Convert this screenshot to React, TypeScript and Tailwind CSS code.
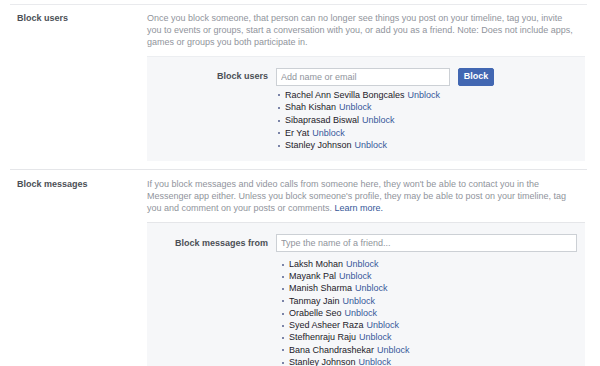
import React from 'react';

const blockedUsers = [
    'Rachel Ann Sevilla Bongcales',
    'Shah Kishan',
    'Sibaprasad Biswal',
    'Er Yat',
    'Stanley Johnson',
];

const blockedMessages = [
    'Laksh Mohan',
    'Mayank Pal',
    'Manish Sharma',
    'Tanmay Jain',
    'Orabelle Seo',
    'Syed Asheer Raza',
    'Stefhenraju Raju',
    'Bana Chandrashekar',
    'Stanley Johnson',
];

function BlockedList({ names, rowClass, indentClass }: { names: string[]; rowClass: string; indentClass: string }) {
    return (
        <ul className={indentClass}>
            {names.map((name) => (
                <li key={name} className={`flex items-center whitespace-nowrap ${rowClass}`}>
                    <span className="w-[2px] h-[2px] bg-[#7b84a8] mr-[5px] shrink-0" />
                    <span className="text-[#1d2129]">{name}</span>
                    <span className="ml-[3px] text-[#365899]">Unblock</span>
                </li>
            ))}
        </ul>
    );
}

export default function App() {
    return (
        <div className="w-[600px] h-[366px] overflow-hidden bg-white font-['Liberation_Sans',Arial,sans-serif] text-[9px]">
            <div className="ml-[10px] w-[577px] pt-[4px]">
                <div className="border-t border-[#e9eaed]" />

                {/* Block users */}
                <div className="flex pt-[7px] pb-[8px] border-b border-[#e5e6e9]">
                    <div className="w-[137px] pl-[7px] font-bold text-[#4b4f56] leading-[12px]">Block users</div>
                    <div className="w-[438px]">
                        <p className="w-[432px] leading-[12px] text-[#90949c]">
                            Once you block someone, that person can no longer see things you post on your timeline, tag you, invite
                            you to events or groups, start a conversation with you, or add you as a friend. Note: Does not include apps,
                            games or groups you both participate in.
                        </p>
                        <div className="mt-[8px] bg-[#f6f7f9] border-t border-[#eceef1] pt-[11px] pb-[9px] flex">
                            <div className="w-[129px] pr-[8px] h-[18px] flex items-center justify-end font-bold text-[#4b4f56]">
                                Block users
                            </div>
                            <div className="flex-1">
                                <div className="flex items-center gap-[8px]">
                                    <input
                                        className="w-[174px] h-[18px] px-[4px] bg-white border border-[#ccd0d5] text-[9px] text-[#1d2129] placeholder:text-[#90949c] outline-none"
                                        placeholder="Add name or email"
                                    />
                                    <button className="w-[36px] h-[18px] rounded-[2px] bg-[#4267b2] border border-[#4267b2] text-white font-bold text-[9px]">
                                        Block
                                    </button>
                                </div>
                                <div className="mt-[3px]">
                                    <BlockedList names={blockedUsers} rowClass="h-[12.7px]" indentClass="pl-[2px]" />
                                </div>
                            </div>
                        </div>
                    </div>
                </div>

                {/* Block messages */}
                <div className="flex pt-[8px]">
                    <div className="w-[137px] pl-[7px] font-bold text-[#4b4f56] leading-[12px]">Block messages</div>
                    <div className="w-[438px]">
                        <p className="w-[432px] leading-[12px] text-[#90949c]">
                            If you block messages and video calls from someone here, they won't be able to contact you in the
                            Messenger app either. Unless you block someone's profile, they may be able to post on your timeline, tag
                            you and comment on your posts or comments. <a className="text-[#365899]">Learn more.</a>
                        </p>
                        <div className="mt-[8px] bg-[#f6f7f9] border-t border-[#e5e6e9] pt-[11px] pb-[10px] flex">
                            <div className="w-[129px] pr-[8px] h-[18px] flex items-center justify-end font-bold text-[#4b4f56]">
                                Block messages from
                            </div>
                            <div className="flex-1">
                                <input
                                    className="w-[301px] h-[18px] px-[4px] bg-white border border-[#ccd0d5] text-[9px] text-[#1d2129] placeholder:text-[#90949c] outline-none"
                                    placeholder="Type the name of a friend..."
                                />
                                <div className="mt-[6px]">
                                    <BlockedList names={blockedMessages} rowClass="h-[12.25px]" indentClass="pl-[6px]" />
                                </div>
                            </div>
                        </div>
                    </div>
                </div>
            </div>
        </div>
    );
}
